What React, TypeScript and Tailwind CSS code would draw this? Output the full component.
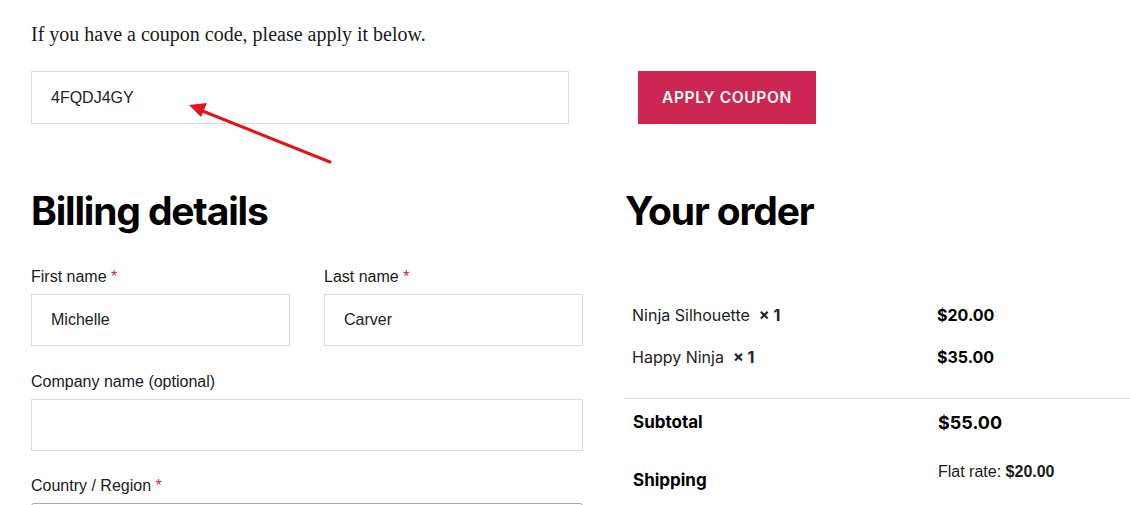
const inputCls = "h-[52px] border border-[#dcdcdc] bg-white px-[19px] flex items-center text-[16px] text-[#222]";

function Label({ text, required }: { text: string; required?: boolean }) {
  return (
    <div className="h-[24px] leading-[24px] text-[16px] text-[#1a1a1a] font-['Liberation_Sans',Arial,sans-serif]">
      {text}
      {required && <span className="text-[#cd2653]"> *</span>}
    </div>
  );
}

function Field({ label, value, required }: { label: string; value?: string; required?: boolean }) {
  return (
    <div className="flex flex-col gap-[5px]">
      <Label text={label} required={required} />
      <div className={inputCls + " font-['Liberation_Sans',Arial,sans-serif]"}>{value}</div>
    </div>
  );
}

export default function App() {
  return (
    <div className="relative w-[1130px] h-[505px] overflow-hidden bg-white pl-[31px] text-black">
      <p className="pt-[24px] text-[20px] leading-[20px] text-[#1a1a1a] font-['Liberation_Serif','Times_New_Roman',serif]">
        If you have a coupon code, please apply it below.
      </p>

      <div className="mt-[27px] flex">
        <div className="w-[538px] h-[53px] border border-[#dcdcdc] pl-[19px] flex items-center text-[16px] text-[#222] font-['Liberation_Sans',Arial,sans-serif]">
          4FQDJ4GY
        </div>
        <button
          type="button"
          className="ml-[69px] w-[178px] h-[53px] bg-[#cd2653] text-white text-[15.5px] font-semibold uppercase tracking-[0.04em] font-['Inter',sans-serif]"
        >
          Apply coupon
        </button>
      </div>

      <div className="mt-[63px] flex gap-[41px]">
        <div className="w-[552px] flex flex-col">
          <h2 className="text-[39px] leading-[48px] font-bold tracking-[-0.03em] font-['Inter',sans-serif]">
            Billing details
          </h2>
          <div className="mt-[30px] grid grid-cols-2 gap-x-[34px]">
            <Field label="First name" value="Michelle" required />
            <Field label="Last name" value="Carver" required />
          </div>
          <div className="mt-[24px]">
            <Field label="Company name (optional)" />
          </div>
          <div className="mt-[23px] flex flex-col gap-[5px]">
            <Label text="Country / Region" required />
            <div className="h-[52px] border border-[#a8a8a8] rounded-[3px]" />
          </div>
        </div>

        <div className="flex-1 flex flex-col font-['Inter',sans-serif]">
          <h2 className="ml-[1px] text-[39px] leading-[48px] font-bold tracking-[-0.03em]">Your order</h2>
          <div className="mt-[59px]">
            {[
              ["Ninja Silhouette", "$20.00"],
              ["Happy Ninja", "$35.00"],
            ].map(([name, price]) => (
              <div key={name} className="grid grid-cols-[306px_1fr] h-[42px] items-center text-[16px]">
                <div className="pl-[8px] text-[#222]">
                  {name}
                  <span className="ml-[9px] font-bold">× 1</span>
                </div>
                <div className="pl-[7px] font-bold">{price}</div>
              </div>
            ))}
          </div>
          <div className="mt-[20px] border-t border-[#dcdcdc]" />
          <div className="grid grid-cols-[306px_1fr] h-[44px] items-center pt-[3px]">
            <div className="pl-[9px] text-[17px] font-bold">Subtotal</div>
            <div className="pl-[8px] text-[18px] font-bold">$55.00</div>
          </div>
          <div className="grid grid-cols-[306px_1fr] pt-[15px]">
            <div className="pl-[9px] pt-[10px] text-[17px] leading-[24px] font-bold">Shipping</div>
            <div className="pl-[8px] text-[16px] leading-[28px] text-[#1a1a1a] font-['Liberation_Sans',Arial,sans-serif]">
              Flat rate: <span className="font-bold">$20.00</span>
            </div>
          </div>
        </div>
      </div>

      <svg className="absolute left-0 top-0 pointer-events-none" width="1130" height="505" viewBox="0 0 1130 505">
        <line x1="330" y1="162" x2="200" y2="110" stroke="#e0161b" strokeWidth="3" strokeLinecap="round" />
        <polygon points="189,105 207,103 201,117" fill="#e0161b" />
      </svg>
    </div>
  );
}
